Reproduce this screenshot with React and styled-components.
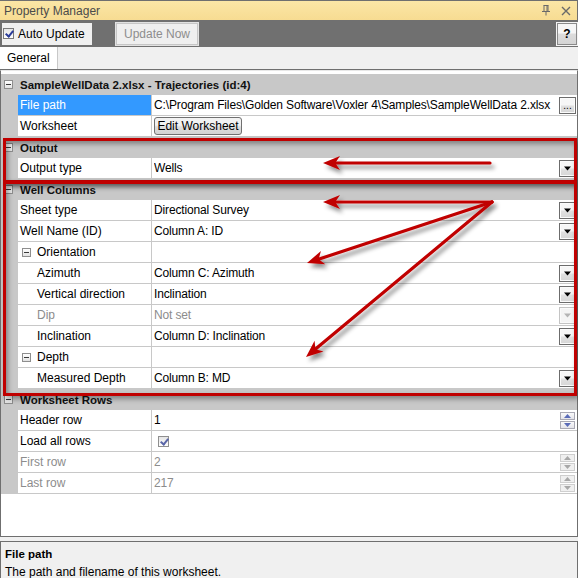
import React from "react";
import styled, { createGlobalStyle } from "styled-components";

const GlobalStyle = createGlobalStyle`
  html, body { margin: 0; padding: 0; background: #f0f0f0; }
  body { font-family: "Liberation Sans", Arial, sans-serif; font-size: 12px; }
`;

const colors = {
  frame: "#6f6f6f",
  gutter: "#c8c8c8",
  line: "#c8c8c8",
  panel: "#f0f0f0",
  disabled: "#8c8c8c",
  select: "#3399ff",
  red: "#c00000",
};

const rows = [
  { kind: "cat", label: "SampleWellData 2.xlsx - Trajectories (id:4)" },
  { label: "File path", value: "C:\\Program Files\\Golden Software\\Voxler 4\\Samples\\SampleWellData 2.xlsx", selected: true, ctl: "dots" },
  { label: "Worksheet", ctl: "edit" },
  { kind: "cat", label: "Output" },
  { label: "Output type", value: "Wells", ctl: "drop" },
  { kind: "cat", label: "Well Columns" },
  { label: "Sheet type", value: "Directional Survey", ctl: "drop" },
  { label: "Well Name (ID)", value: "Column A: ID", ctl: "drop" },
  { kind: "sub", label: "Orientation" },
  { label: "Azimuth", value: "Column C: Azimuth", ctl: "drop", indent: true },
  { label: "Vertical direction", value: "Inclination", ctl: "drop", indent: true },
  { label: "Dip", value: "Not set", ctl: "drop", indent: true, disabled: true },
  { label: "Inclination", value: "Column D: Inclination", ctl: "drop", indent: true },
  { kind: "sub", label: "Depth" },
  { label: "Measured Depth", value: "Column B: MD", ctl: "drop", indent: true },
  { kind: "cat", label: "Worksheet Rows" },
  { label: "Header row", value: "1", ctl: "spin" },
  { label: "Load all rows", ctl: "check" },
  { label: "First row", value: "2", ctl: "spin", disabled: true },
  { label: "Last row", value: "217", ctl: "spin", disabled: true },
];

const arrows = [
  [490, 163, 323, 163],
  [492, 202, 323, 202],
  [492, 202, 307, 263],
  [492, 202, 306, 357],
];

const arrowHead = (x1, y1, x2, y2) => {
  const len = Math.hypot(x2 - x1, y2 - y1);
  const dx = (x2 - x1) / len;
  const dy = (y2 - y1) / len;
  const L = 17;
  const W = 7;
  const bx = x2 - dx * L;
  const by = y2 - dy * L;
  const nx = x2 - dx * L * 0.72;
  const ny = y2 - dy * L * 0.72;
  return {
    head: `${x2},${y2} ${bx - dy * W},${by + dx * W} ${nx},${ny} ${bx + dy * W},${by - dx * W}`,
    ex: nx + dx * 1,
    ey: ny + dy * 1,
  };
};

const Minus = ({ sub }) => (
  <Expander sub={sub}>
    <span />
  </Expander>
);

const DropButton = ({ disabled }) => (
  <SmallBtn disabled={disabled}>
    <svg width="9" height="5" viewBox="0 0 9 5">
      <path d="M1 0.5 L8 0.5 L4.5 4.5 Z" fill={disabled ? "#b4b4b4" : "#000"} />
    </svg>
  </SmallBtn>
);

const Spinner = ({ disabled }) => {
  const fill = disabled ? "#a8a8a8" : "#5a6bb8";
  return (
    <SpinBox>
      <SpinPart disabled={disabled}>
        <svg width="7" height="4" viewBox="0 0 7 4">
          <path d="M0 4 L7 4 L3.5 0 Z" fill={fill} />
        </svg>
      </SpinPart>
      <SpinPart disabled={disabled}>
        <svg width="7" height="4" viewBox="0 0 7 4">
          <path d="M0 0 L7 0 L3.5 4 Z" fill={fill} />
        </svg>
      </SpinPart>
    </SpinBox>
  );
};

const renderControl = (r) => {
  if (r.ctl === "drop") return <DropButton disabled={r.disabled} />;
  if (r.ctl === "dots") return <SmallBtn><Dots>...</Dots></SmallBtn>;
  if (r.ctl === "spin") return <Spinner disabled={r.disabled} />;
  return null;
};

export default () => {
  return (
    <Window>
      <GlobalStyle />
      <TitleBar>
        <span>Property Manager</span>
        <TitleIcons>
          <svg width="10" height="11" viewBox="0 0 10 11">
            <path d="M2.5 0.5 H7.5 M3 0.5 V6 M7 0.5 V6 M6 0.5 V6 M1 6.5 H9 M5 6.5 V10.5" stroke="#6a6a6a" strokeWidth="1" fill="none" />
          </svg>
          <svg width="10" height="10" viewBox="0 0 10 10">
            <path d="M1 1 L9 9 M9 1 L1 9" stroke="#6a6a6a" strokeWidth="1.4" />
          </svg>
        </TitleIcons>
      </TitleBar>

      <Toolbar>
        <AutoUpdate>
          <CheckBox checked />
          Auto Update
        </AutoUpdate>
        <ToolButton disabled>Update Now</ToolButton>
        <HelpButton>?</HelpButton>
      </Toolbar>

      <TabStrip>
        <Tab active>General</Tab>
      </TabStrip>

      <GridPanel>
        {rows.map((r, i) => {
          if (r.kind === "cat") {
            return (
              <CategoryRow key={i}>
                <Gutter>
                  <Minus />
                </Gutter>
                <CategoryLabel>{r.label}</CategoryLabel>
              </CategoryRow>
            );
          }
          if (r.kind === "sub") {
            return (
              <Row key={i}>
                <Gutter />
                <Label>
                  <Minus sub />
                  {r.label}
                </Label>
                <Value />
              </Row>
            );
          }
          return (
            <Row key={i}>
              <Gutter />
              <Label indent={r.indent} selected={r.selected} disabled={r.disabled}>
                {r.label}
              </Label>
              <Value disabled={r.disabled}>
                {r.ctl === "edit" && <EditButton>Edit Worksheet</EditButton>}
                {r.ctl === "check" && <CheckBox checked muted />}
                <ValueText>{r.value}</ValueText>
                {renderControl(r)}
              </Value>
            </Row>
          );
        })}
      </GridPanel>

      <DescPanel>
        <DescTitle>File path</DescTitle>
        <DescText>The path and filename of this worksheet.</DescText>
      </DescPanel>

      <Highlight top={138} height={45} />
      <Highlight top={181} height={215} />

      <Annotations width="578" height="578" viewBox="0 0 578 578">
        <defs>
          <filter id="shadow" x="-20%" y="-20%" width="140%" height="140%">
            <feDropShadow dx="3" dy="4" stdDeviation="2" floodColor="#000" floodOpacity="0.45" />
          </filter>
        </defs>
        <g filter="url(#shadow)">
          {arrows.map(([x1, y1, x2, y2], i) => {
            const a = arrowHead(x1, y1, x2, y2);
            return (
              <g key={i}>
                <line x1={x1} y1={y1} x2={a.ex} y2={a.ey} stroke={colors.red} strokeWidth="3.2" strokeLinecap="round" />
                <polygon points={a.head} fill={colors.red} />
              </g>
            );
          })}
        </g>
      </Annotations>
    </Window>
  );
};

const Window = styled.div`
  position: relative;
  width: 578px;
  height: 578px;
  display: flex;
  flex-direction: column;
  background: ${colors.panel};
  overflow: hidden;
  color: #000;
`;

const TitleBar = styled.div`
  height: 20px;
  box-sizing: border-box;
  border-top: 1px solid ${colors.frame};
  border-right: 1px solid ${colors.frame};
  background: linear-gradient(#fbe6a6, #f7dc92);
  color: #4b4b4b;
  display: flex;
  align-items: center;
  justify-content: space-between;
  padding: 0 6px 0 4px;
`;

const TitleIcons = styled.div`
  display: flex;
  align-items: center;
  gap: 10px;
`;

const Toolbar = styled.div`
  height: 27px;
  background: #707070;
  display: flex;
  align-items: center;
  padding: 0 1px 0 2px;
  box-sizing: border-box;
`;

const AutoUpdate = styled.label`
  height: 22px;
  width: 90px;
  box-sizing: border-box;
  background: ${colors.panel};
  display: flex;
  align-items: center;
  gap: 4px;
  padding-left: 1px;
`;

const CheckBox = styled.span`
  width: 11px;
  height: 11px;
  box-sizing: border-box;
  border: 1px solid ${(p) => (p.muted ? "#8f8f8f" : "#7a7a7a")};
  background: linear-gradient(#e6e6e6, #fdfdfd);
  position: relative;
  margin-left: ${(p) => (p.muted ? "4px" : "0")};
  &::after {
    content: "";
    position: absolute;
    left: 3px;
    top: 0px;
    width: 3px;
    height: 6px;
    border: solid ${(p) => (p.muted ? "#5a66a8" : "#2a3c9a")};
    border-width: 0 2px 2px 0;
    transform: rotate(40deg);
    display: ${(p) => (p.checked ? "block" : "none")};
  }
`;

const ToolButton = styled.button`
  margin-left: 24px;
  height: 22px;
  width: 82px;
  box-sizing: border-box;
  font: inherit;
  color: #8d8d8d;
  background: #efefef;
  border: 1px solid #c6c6c6;
  outline: 1px solid #e2e2e2;
  padding: 0;
`;

const HelpButton = styled.button`
  margin-left: auto;
  width: 20px;
  height: 22px;
  box-sizing: border-box;
  font: bold 12px "Liberation Sans", Arial, sans-serif;
  color: #000;
  background: linear-gradient(#f6f6f6 45%, #dcdcdc 50%, #d4d4d4);
  border: 1px solid #8a8a8a;
  outline: 1px solid #f4f4f4;
  padding: 0;
`;

const TabStrip = styled.div`
  height: 23px;
  box-sizing: border-box;
  background: ${colors.panel};
  border-bottom: 1px solid ${colors.frame};
  display: flex;
  align-items: flex-end;
`;

const Tab = styled.div`
  height: 22px;
  box-sizing: border-box;
  padding: 0 7px;
  background: ${(p) => (p.active ? "#fff" : "transparent")};
  border-right: 1px solid #c8c8c8;
  display: flex;
  align-items: center;
`;

const GridPanel = styled.div`
  height: 467px;
  box-sizing: border-box;
  background: #fff;
  border: 1px solid ${colors.frame};
  border-top: 1px solid #e8e8e8;
  padding-top: 3px;
  display: flex;
  flex-direction: column;
`;

const Row = styled.div`
  height: 21px;
  display: flex;
  flex-shrink: 0;
`;

const CategoryRow = styled(Row)`
  background: ${colors.gutter};
`;

const Gutter = styled.div`
  width: 17px;
  flex-shrink: 0;
  background: ${colors.gutter};
  display: flex;
  align-items: center;
  padding-left: 3px;
  box-sizing: border-box;
`;

const Expander = styled.span`
  width: 9px;
  height: 9px;
  box-sizing: border-box;
  border: 1px solid #8e8e8e;
  background: linear-gradient(#ffffff, #e2e2e2);
  display: inline-flex;
  align-items: center;
  justify-content: center;
  margin-right: ${(p) => (p.sub ? "6px" : "0")};
  margin-left: ${(p) => (p.sub ? "2px" : "0")};
  flex-shrink: 0;
  span {
    width: 5px;
    height: 1px;
    background: #3a3a3a;
  }
`;

const CategoryLabel = styled.div`
  font-weight: bold;
  font-size: 11.5px;
  display: flex;
  align-items: center;
  padding-left: 2px;
  white-space: nowrap;
  color: #111;
`;

const Label = styled.div`
  width: 134px;
  flex-shrink: 0;
  box-sizing: border-box;
  border-right: 1px solid ${colors.line};
  border-bottom: 1px solid ${colors.line};
  padding-left: ${(p) => (p.indent ? "19px" : "2px")};
  display: flex;
  align-items: center;
  white-space: nowrap;
  background: ${(p) => (p.selected ? colors.select : "#fff")};
  color: ${(p) => (p.selected ? "#fff" : p.disabled ? colors.disabled : "#000")};
`;

const Value = styled.div`
  flex: 1;
  min-width: 0;
  box-sizing: border-box;
  border-bottom: 1px solid ${colors.line};
  padding: 0 1px 0 2px;
  display: flex;
  align-items: center;
  white-space: nowrap;
  color: ${(p) => (p.disabled ? colors.disabled : "#000")};
`;

const ValueText = styled.span`
  flex: 1;
  min-width: 0;
  overflow: hidden;
  letter-spacing: -0.14px;
`;

const SmallBtn = styled.span`
  width: 17px;
  height: 17px;
  box-sizing: border-box;
  border: 1px solid ${(p) => (p.disabled ? "#c4c4c4" : "#6c6c6c")};
  background: ${(p) =>
    p.disabled ? "#f4f4f4" : "linear-gradient(#f6f6f6 45%, #e0e0e0 55%, #d6d6d6)"};
  box-shadow: inset 0 0 0 1px ${(p) => (p.disabled ? "#fafafa" : "#fbfbfb")};
  display: flex;
  align-items: center;
  justify-content: center;
  flex-shrink: 0;
`;

const Dots = styled.span`
  font-size: 10px;
  line-height: 1;
  margin-top: 2px;
`;

const SpinBox = styled.span`
  width: 15px;
  height: 17px;
  display: flex;
  flex-direction: column;
  gap: 1px;
  margin-right: 1px;
`;

const SpinPart = styled.span`
  flex: 1;
  box-sizing: border-box;
  border: 1px solid ${(p) => (p.disabled ? "#cfcfcf" : "#a9a9b4")};
  background: ${(p) => (p.disabled ? "#f0f0f0" : "linear-gradient(#fafafa, #e4e4ea)")};
  display: flex;
  align-items: center;
  justify-content: center;
`;

const EditButton = styled.button`
  height: 18px;
  width: 88px;
  box-sizing: border-box;
  font: inherit;
  padding: 0;
  border: 1px solid #707070;
  border-radius: 3px;
  background: linear-gradient(#f2f2f2 45%, #dddddd 55%, #d2d2d2);
  color: #000;
  flex-shrink: 0;
`;

const DescPanel = styled.div`
  margin-top: 4px;
  flex: 1;
  box-sizing: border-box;
  border: 1px solid ${colors.frame};
  border-bottom: none;
  background: ${colors.panel};
  padding: 5px 4px 0;
  overflow: hidden;
`;

const DescTitle = styled.div`
  font-weight: bold;
  font-size: 11.5px;
  line-height: 14px;
`;

const DescText = styled.div`
  margin-top: 4px;
  line-height: 14px;
`;

const Highlight = styled.div`
  position: absolute;
  left: 3px;
  right: 1px;
  top: ${(p) => p.top}px;
  height: ${(p) => p.height}px;
  box-sizing: border-box;
  border: 3px solid ${colors.red};
  box-shadow: 2px 3px 5px rgba(0, 0, 0, 0.35), inset 2px 3px 5px rgba(0, 0, 0, 0.35);
  pointer-events: none;
`;

const Annotations = styled.svg`
  position: absolute;
  left: 0;
  top: 0;
  pointer-events: none;
`;
